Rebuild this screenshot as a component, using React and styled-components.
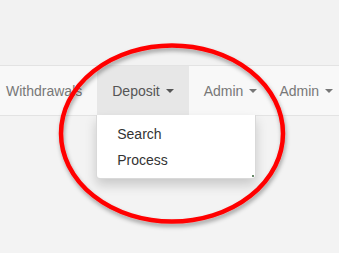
import { createGlobalStyle } from "styled-components";
import styled from "styled-components";

const GlobalStyle = createGlobalStyle`
  html, body {
    margin: 0;
    padding: 0;
    background: #f3f3f3;
    font-family: "Liberation Sans", Arial, sans-serif;
    font-size: 14px;
    overflow: hidden;
  }
`;

const navItems = [
  { label: "Withdrawals", caret: false },
  { label: "Deposit", caret: true, active: true, menu: ["Search", "Process"] },
  { label: "Admin", caret: true },
  { label: "Admin", caret: true, tight: true },
];

export default function App() {
  return (
    <Page>
      <GlobalStyle />
      <TopArea />
      <Navbar>
        <NavList>
          {navItems.map((item, i) => (
            <NavItem key={i} $active={item.active} $tight={item.tight}>
              <NavLink $active={item.active}>
                {item.label}
                {item.caret && <Caret />}
              </NavLink>
              {item.menu && (
                <DropdownMenu>
                  {item.menu.map((m) => (
                    <MenuItem key={m}>{m}</MenuItem>
                  ))}
                  <Grip />
                </DropdownMenu>
              )}
            </NavItem>
          ))}
        </NavList>
      </Navbar>
      <Content />
      {/* red annotation circle drawn over the screenshot */}
      <Annotation width="339" height="253" viewBox="0 0 339 253">
        <defs>
          <filter id="sh" x="-20%" y="-20%" width="140%" height="140%">
            <feDropShadow dx="1" dy="3" stdDeviation="2" floodColor="#000" floodOpacity="0.35" />
          </filter>
        </defs>
        <ellipse
          cx="172"
          cy="133.5"
          rx="111"
          ry="88"
          fill="none"
          stroke="#ff0000"
          strokeWidth="4.5"
          filter="url(#sh)"
        />
      </Annotation>
    </Page>
  );
}

const Page = styled.div`
  position: relative;
  width: 339px;
  height: 253px;
  background: #f3f3f3;
  overflow: hidden;
`;

const TopArea = styled.div`
  height: 65px;
  background: #f2f2f2;
`;

const Navbar = styled.nav`
  height: 49px;
  background: #f8f8f8;
  border-top: 1px solid #e3e3e3;
  border-bottom: 1px solid #e3e3e3;
`;

const NavList = styled.ul`
  display: flex;
  margin: 0 0 0 -9px;
  padding: 0;
  list-style: none;
  height: 100%;
`;

const NavItem = styled.li`
  position: relative;
  height: 100%;
  margin-left: ${(p) => (p.$tight ? "-8px" : "0")};
  background: ${(p) => (p.$active ? "#e7e7e7" : "transparent")};
`;

const NavLink = styled.a`
  display: flex;
  align-items: center;
  height: 100%;
  padding: 0 15px;
  color: ${(p) => (p.$active ? "#555" : "#777")};
  white-space: nowrap;
  cursor: pointer;
`;

const Caret = styled.span`
  display: inline-block;
  width: 0;
  height: 0;
  margin-left: 6px;
  margin-top: 1px;
  border-top: 4px solid currentColor;
  border-left: 4px solid transparent;
  border-right: 4px solid transparent;
`;

const DropdownMenu = styled.ul`
  position: absolute;
  top: 100%;
  left: -1px;
  z-index: 2;
  box-sizing: border-box;
  width: 160px;
  margin: 0;
  padding: 6px 0 5px;
  list-style: none;
  background: #fff;
  border: 1px solid rgba(0, 0, 0, 0.15);
  border-top: 0;
  border-radius: 0 0 4px 4px;
  box-shadow: 0 6px 12px rgba(0, 0, 0, 0.175);
`;

const MenuItem = styled.li`
  padding: 3px 20px;
  line-height: 20px;
  color: #333;
`;

const Grip = styled.span`
  position: absolute;
  right: 1px;
  bottom: 1px;
  width: 2px;
  height: 2px;
  background: #6a8a6a;
`;

const Content = styled.div`
  height: 138px;
  background: #f3f3f3;
`;

const Annotation = styled.svg`
  position: absolute;
  left: 0;
  top: 0;
  pointer-events: none;
  z-index: 5;
`;
